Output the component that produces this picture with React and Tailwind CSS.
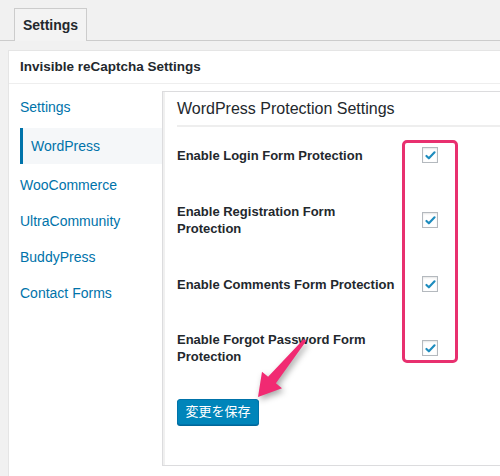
import React from 'react';

const navItems = ['Settings', 'WordPress', 'WooCommerce', 'UltraCommunity', 'BuddyPress', 'Contact Forms'];

const rows = [
  { label: 'Enable Login Form Protection', h: 'h-[61px] pb-[5px]' },
  { label: 'Enable Registration Form Protection', h: 'h-16' },
  { label: 'Enable Comments Form Protection', h: 'h-16' },
  { label: 'Enable Forgot Password Form Protection', h: 'h-16' },
];

const Checkbox = () => (
  <span className="w-4 h-4 border border-[#b4b9be] bg-white shadow-[inset_0_1px_2px_rgba(0,0,0,0.1)] flex items-center justify-center">
    <svg className="w-[13px] h-[13px]" viewBox="0 0 16 16" fill="none">
      <path d="M3 8.5l3 3 7-7.5" stroke="#1e8cbe" strokeWidth="2.6" strokeLinecap="round" strokeLinejoin="round" />
    </svg>
  </span>
);

const App = () => {
  return (
    <div
      className="relative w-[500px] h-[476px] overflow-hidden bg-[#f1f1f1] text-[#23282d]"
      style={{ fontFamily: '"Liberation Sans", "Noto Sans CJK JP", sans-serif' }}
    >
      {/* tabs */}
      <div className="h-[41px] pt-2 pl-[14px] border-b border-[#cccccc]">
        <div className="h-[33px] w-[73px] border border-b-0 border-[#cccccc] bg-[#f3f3f3] flex items-center justify-center text-[14px] font-bold">
          Settings
        </div>
      </div>

      <div className="ml-2 mt-[9px] bg-white border-t border-l border-[#e5e5e5] h-[430px]">
        <div className="h-[33px] border-b border-[#eeeeee] flex items-center pl-[11px] text-[13.5px] font-bold">
          Invisible reCaptcha Settings
        </div>

        <div className="flex">
          {/* side nav */}
          <div className="w-[153px] pt-[5px] pl-[11px] shrink-0">
            {navItems.map((item) =>
              item === 'WordPress' ? (
                <div
                  key={item}
                  className="h-9 my-[3px] -mr-[1px] border-l-[3px] border-[#0073aa] bg-[#f5f7f9] flex items-center pl-[8px] text-[14px] text-[#0073aa]"
                >
                  {item}
                </div>
              ) : (
                <div key={item} className="h-9 flex items-center text-[14px] text-[#0073aa]">
                  {item}
                </div>
              )
            )}
          </div>

          {/* panel */}
          <div className="flex-1 mt-[7px] h-[375px] border border-r-0 border-[#dcdcde] bg-white pl-[14px] shadow-[inset_2px_0_0_#f0f0f0]">
            <div className="h-[35px] flex items-center text-[16px] border-b-2 border-[#eeeeee]">
              WordPress Protection Settings
            </div>
            {rows.map((r) => (
              <div key={r.label} className={`${r.h} flex items-center`}>
                <div className="w-[226px] text-[13px] font-bold leading-[17px] pr-2">{r.label}</div>
                <div className="ml-[19px]">
                  <Checkbox />
                </div>
              </div>
            ))}
            <button className="mt-[19px] h-[26px] w-[82px] rounded-[3px] bg-[#0085ba] border border-[#0073aa] shadow-[0_1px_0_#006799] text-white text-[13px] flex items-center justify-center">
              変更を保存
            </button>
          </div>
        </div>
      </div>

      {/* annotation box */}
      <div className="absolute left-[402px] top-[140px] w-[56px] h-[223px] border-[3px] border-[#e8306f] rounded-[5px]" />

      {/* annotation arrow */}
      <svg
        className="absolute left-0 top-0 drop-shadow-[2px_3px_3px_rgba(0,0,0,0.35)]"
        width="500"
        height="476"
        viewBox="0 0 500 476"
      >
        <polygon
          points="303.8,339 268.1,376.8 262,371.7 258,397 282,388.3 275.9,383.2 306.2,341"
          fill="#f12a72"
        />
      </svg>
    </div>
  );
};

export default App;
